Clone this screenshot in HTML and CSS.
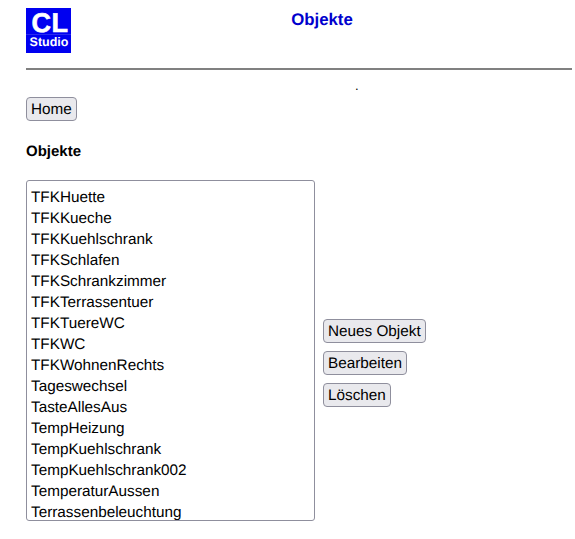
FILE: index.html
```html
<!DOCTYPE html>
<html lang="en">
<head>
    <meta charset="UTF-8">
    <title>Objekte</title>
    <link rel="stylesheet" href="styles.css">
</head>
<body>

<header class="top">
    <div class="logo">
        <div class="logo-cl">CL</div>
        <div class="logo-studio">Studio</div>
    </div>
    <h1>Objekte</h1>
</header>
<hr>
<div class="dot">.</div>

<button class="btn-home">Home</button>

<h2>Objekte</h2>

<div class="editor">
    <select class="list" size="16">
        <option>TFKHuette</option>
        <option>TFKKueche</option>
        <option>TFKKuehlschrank</option>
        <option>TFKSchlafen</option>
        <option>TFKSchrankzimmer</option>
        <option>TFKTerrassentuer</option>
        <option>TFKTuereWC</option>
        <option>TFKWC</option>
        <option>TFKWohnenRechts</option>
        <option>Tageswechsel</option>
        <option>TasteAllesAus</option>
        <option>TempHeizung</option>
        <option>TempKuehlschrank</option>
        <option>TempKuehlschrank002</option>
        <option>TemperaturAussen</option>
        <option>Terrassenbeleuchtung</option>
    </select>
    <div class="actions">
        <button>Neues Objekt</button>
        <button>Bearbeiten</button>
        <button>Löschen</button>
    </div>
</div>

</body>
</html>
```

FILE: styles.css
```css
body {
    margin: 8px 3px 0 26px;
    font-family: "Liberation Sans", Arial, sans-serif;
    font-size: 15.3px;
    color: #000;
    background: #fff;
    text-rendering: geometricPrecision;
}
.top {
    display: flex;
    height: 59px;
}
.logo {
    width: 45px;
    height: 45px;
    background: #0000f0;
    color: #fff;
    font-weight: bold;
    text-align: center;
    overflow: hidden;
}
.logo-cl {
    font-size: 27px;
    line-height: 20px;
    margin-top: 5px;
    padding-left: 3px;
    letter-spacing: 0.5px;
    -webkit-text-stroke: 0.6px #fff;
}
.logo-studio {
    margin-top: 1px;
    padding: 1px 2px 0 3px;
    font-size: 12.5px;
    line-height: 13px;
    border-top: 1px solid #2a2af0;
}
h1 {
    flex: 1;
    margin: 3px 0 0 1px;
    font-size: 16.8px;
    line-height: 18px;
    text-align: center;
    color: #0000cd;
}
hr {
    margin: 1px 0 0;
    height: 2px;
    border: none;
    background: #808080;
}
.dot {
    height: 27px;
    padding-left: 329px;
    font-size: 13px;
    line-height: 32px;
}
button {
    font: 15.3px "Liberation Sans", Arial, sans-serif;
    color: #000;
    background: #e9e9ed;
    border: 1px solid #8f8f9d;
    border-radius: 4px;
    padding: 2px 4px 0;
    text-rendering: geometricPrecision;
}
.btn-home {
    display: block;
    height: 24px;
}
h2 {
    margin: 22px 0 19px;
    font-size: 15px;
    line-height: 18px;
}
.editor {
    display: flex;
    align-items: center;
    gap: 8px;
}
.list {
    width: 289px;
    height: 341px;
    padding: 8px 0 0;
    border: 1px solid #8f8f9d;
    border-radius: 3px;
    font: 15.3px "Liberation Sans", Arial, sans-serif;
    color: #000;
    background: #fff;
    overflow: hidden;
    outline: none;
    text-rendering: geometricPrecision;
}
.list option {
    height: 21px;
    line-height: 21px;
    padding: 0 4px;
    min-height: 0;
}
.actions {
    display: flex;
    flex-direction: column;
    align-items: flex-start;
    gap: 8px;
    margin-top: 24px;
}
.actions button {
    height: 24px;
}
```
